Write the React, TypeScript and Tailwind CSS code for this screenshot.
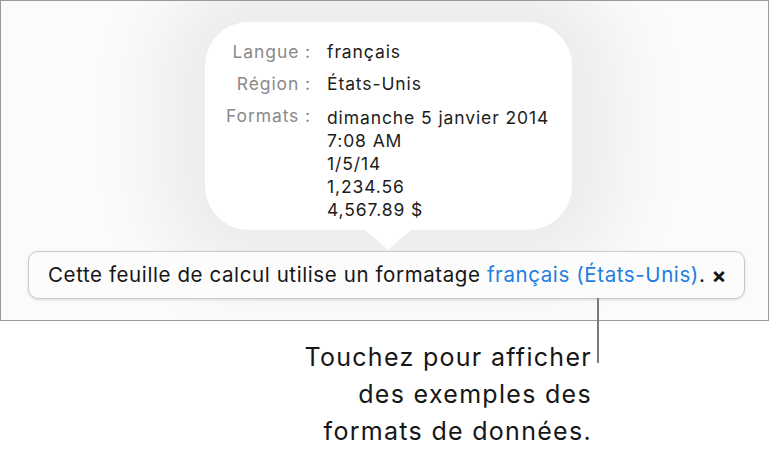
import React from "react";

export default function App() {
  const font = { fontFamily: "Inter, 'Noto Sans', sans-serif" };
  return (
    <div className="relative w-[771px] h-[450px] bg-white overflow-hidden" style={font}>
      <div className="relative w-[769px] h-[321px] border border-[#9a9a9a] bg-[#fbfbfb] flex flex-col overflow-hidden">
        <div className="relative ml-[204px] mt-[21px] w-[367px] h-[208px] rounded-[44px] bg-white shadow-[0_0_80px_45px_rgba(0,0,0,0.065)]">
          <div className="grid grid-cols-[106px_1fr] gap-x-[16px] pt-[18px] text-[17.5px] tracking-[0.9px]">
            <div className="text-right text-[#8a8a8a] leading-[24px]">Langue :</div>
            <div className="text-[#1c1c1c] leading-[24px]">français</div>
            <div className="text-right text-[#8a8a8a] leading-[24px] mt-[8px]">Région :</div>
            <div className="text-[#1c1c1c] leading-[24px] mt-[8px]">États-Unis</div>
            <div className="text-right text-[#8a8a8a] leading-[23px] mt-[8px]">Formats :</div>
            <div className="text-[#1c1c1c] leading-[23px] mt-[10px]">
              <div>dimanche 5 janvier 2014</div>
              <div>7:08 AM</div>
              <div>1/5/14</div>
              <div>1,234.56</div>
              <div>4,567.89 $</div>
            </div>
          </div>
          <div className="absolute left-[158px] top-[206px] w-0 h-0 border-l-[25px] border-r-[25px] border-t-[22px] border-l-transparent border-r-transparent border-t-white" />
        </div>
        <div className="relative mt-[21px] ml-[27px] w-[717px] h-[48px] rounded-[10px] border border-[#c9c9c9] bg-[#fcfcfc] shadow-[0_1px_3px_rgba(0,0,0,0.12)] flex items-center pl-[19px] pr-[17px] text-[20.5px] text-[#161616] tracking-[0.6px] whitespace-nowrap">
          <span>
            Cette feuille de calcul utilise un formatage{" "}
            <span className="text-[#1f7ee0]">français (États-Unis)</span>.
          </span>
          <span className="ml-auto text-[22px] font-bold leading-none">×</span>
        </div>
      </div>
      <div className="absolute left-[597px] top-[298px] w-[2px] h-[65px] bg-[#7a7a7a]" />
      <div className="absolute right-[179px] top-[339px] text-right text-[25px] leading-[37px] text-[#161616] tracking-[1.3px]">
        <div>Touchez pour afficher</div>
        <div>des exemples des</div>
        <div>formats de données.</div>
      </div>
    </div>
  );
}
